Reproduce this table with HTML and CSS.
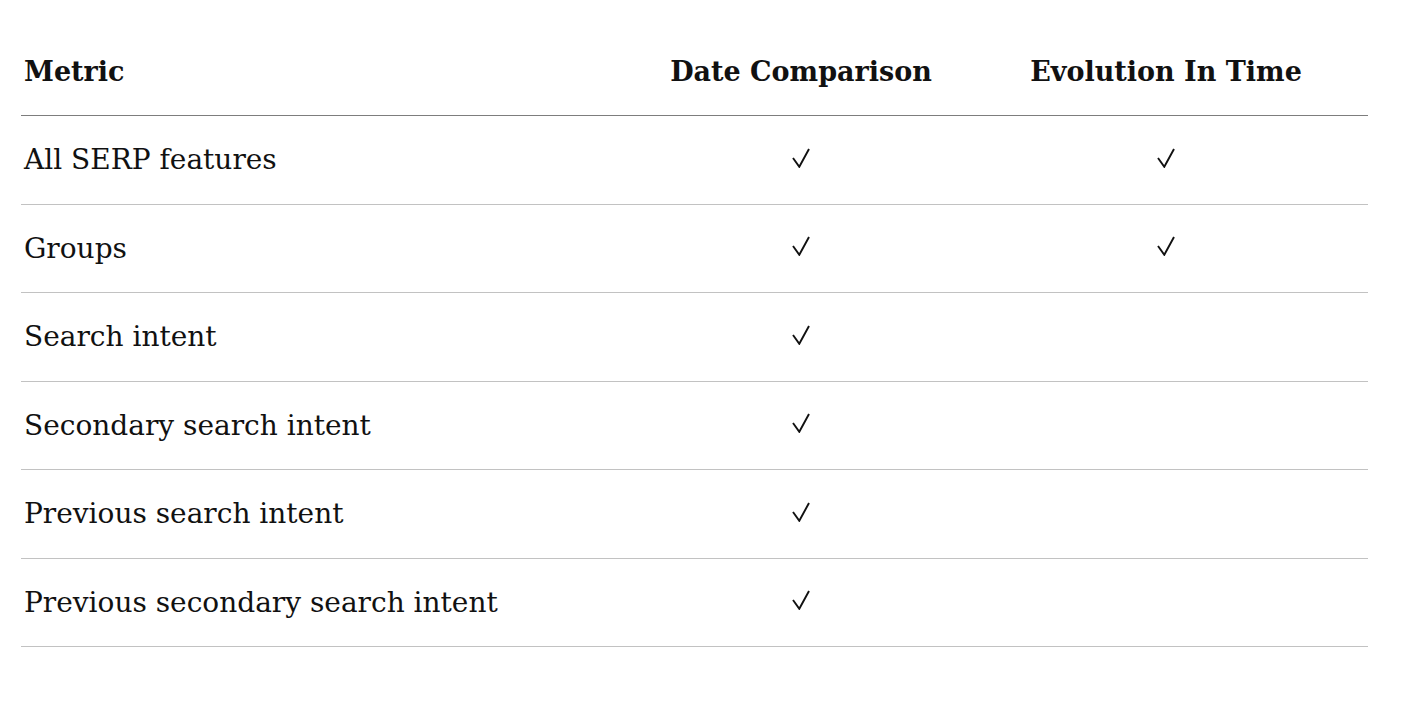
FILE: index.html
```html
<!DOCTYPE html>
<html lang="en">
<head>
<meta charset="utf-8">
<title>Metrics</title>
<link rel="stylesheet" href="styles.css">
</head>
<body>
<div class="wrap">
<table class="metrics">
  <colgroup>
    <col class="c1"><col class="c2"><col class="c3">
  </colgroup>
  <thead>
    <tr><th class="left">Metric</th><th>Date Comparison</th><th>Evolution In Time</th></tr>
  </thead>
  <tbody>
    <tr><td class="left">All SERP features</td><td><svg class="check" viewBox="0 0 18 20"><polyline points="1,10 7.3,18.8 17,1"/></svg></td><td><svg class="check" viewBox="0 0 18 20"><polyline points="1,10 7.3,18.8 17,1"/></svg></td></tr>
    <tr><td class="left">Groups</td><td><svg class="check" viewBox="0 0 18 20"><polyline points="1,10 7.3,18.8 17,1"/></svg></td><td><svg class="check" viewBox="0 0 18 20"><polyline points="1,10 7.3,18.8 17,1"/></svg></td></tr>
    <tr><td class="left">Search intent</td><td><svg class="check" viewBox="0 0 18 20"><polyline points="1,10 7.3,18.8 17,1"/></svg></td><td></td></tr>
    <tr><td class="left">Secondary search intent</td><td><svg class="check" viewBox="0 0 18 20"><polyline points="1,10 7.3,18.8 17,1"/></svg></td><td></td></tr>
    <tr><td class="left">Previous search intent</td><td><svg class="check" viewBox="0 0 18 20"><polyline points="1,10 7.3,18.8 17,1"/></svg></td><td></td></tr>
    <tr><td class="left">Previous secondary search intent</td><td><svg class="check" viewBox="0 0 18 20"><polyline points="1,10 7.3,18.8 17,1"/></svg></td><td></td></tr>
  </tbody>
</table>
</div>
</body>
</html>
```
FILE: styles.css
```css
html, body {
  margin: 0;
  padding: 0;
  background: #ffffff;
}
body {
  font-family: "DejaVu Serif", "Liberation Serif", serif;
  color: #111111;
}
.wrap {
  padding: 27px 0 0 21px;
}
.metrics {
  width: 1347px;
  border-collapse: collapse;
  table-layout: fixed;
}
.c1 { width: 617px; }
.c2 { width: 326px; }
.c3 { width: 404px; }
.metrics th {
  height: 88px;
  padding: 0;
  font-size: 27px;
  font-weight: 700;
  text-align: center;
  vertical-align: middle;
  border-bottom: 1px solid #7d7d7d;
}
.metrics td {
  height: 87.5px;
  padding: 0;
  font-size: 28px;
  font-weight: 400;
  text-align: center;
  vertical-align: middle;
  border-bottom: 1px solid #c2c2c2;
}
.metrics .left {
  text-align: left;
  padding-left: 3px;
}
.check {
  display: block;
  width: 18px;
  height: 20px;
  margin: -4px auto 0;
  fill: none;
  stroke: #111111;
  stroke-width: 1.9;
  stroke-linecap: butt;
  stroke-linejoin: miter;
}
```
